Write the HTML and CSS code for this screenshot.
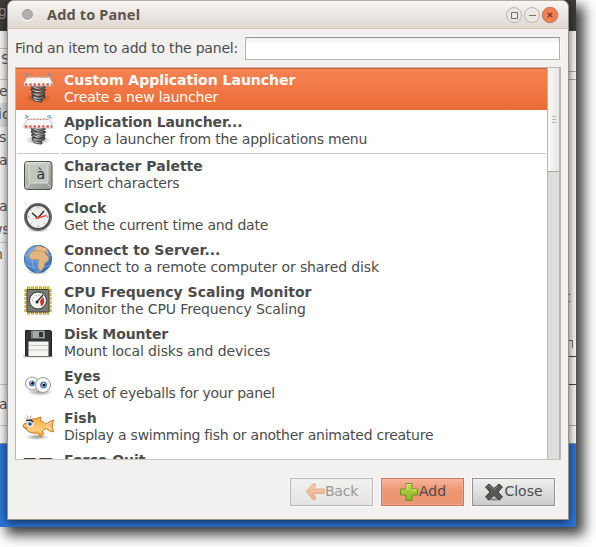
FILE: index.html
```html
<!DOCTYPE html>
<html lang="en">
<head>
<meta charset="utf-8">
<title>Add to Panel</title>
<link rel="stylesheet" href="styles.css">
</head>
<body>
<svg width="0" height="0" class="defs" aria-hidden="true">
  <defs>
    <linearGradient id="metal" gradientUnits="userSpaceOnUse" x1="9" y1="0" x2="23" y2="0"><stop offset="0" stop-color="#555"/><stop offset=".4" stop-color="#ddd"/><stop offset="1" stop-color="#444"/></linearGradient>
    <linearGradient id="key" x1="0" y1="0" x2="1" y2="1"><stop offset="0" stop-color="#c5cbc1"/><stop offset="1" stop-color="#929890"/></linearGradient>
    <radialGradient id="shade"><stop offset="0" stop-color="#000" stop-opacity=".42"/><stop offset="1" stop-color="#000" stop-opacity="0"/></radialGradient>
    <radialGradient id="globe" cx=".35" cy=".25" r=".8"><stop offset="0" stop-color="#87b3e6"/><stop offset="1" stop-color="#2e6fbd"/></radialGradient>
    <linearGradient id="fishskin" x1="0" y1="0" x2="0" y2="1"><stop offset="0" stop-color="#ffa83e"/><stop offset=".65" stop-color="#ffd083"/><stop offset="1" stop-color="#ee8818"/></linearGradient>
    <linearGradient id="plus" x1="0" y1="0" x2="0" y2="1"><stop offset="0" stop-color="#c4de45"/><stop offset="1" stop-color="#86b32d"/></linearGradient>
    <linearGradient id="arrow" x1="0" y1="0" x2="0" y2="1"><stop offset="0" stop-color="#f5d0ad"/><stop offset="1" stop-color="#ecaa8d"/></linearGradient>
    <symbol id="spring" viewBox="0 0 32 32">
      <ellipse cx="16" cy="25" rx="13" ry="5" fill="url(#shade)"/>
      <path d="M10 13.500q6 3.500 12.500 0M10 16.500q6 4 12.500 .5M10.500 20q6 4 11.500 .5M11 23.500q6 3.500 11 0M11.500 24c0 3 3 4 7.500 4" fill="none" stroke="#3a3c39" stroke-width="2.800" stroke-linecap="round"/>
      <path d="M10 13.500q6 3.500 12.500 0M10 16.500q6 4 12.500 .5M10.500 20q6 4 11.500 .5M11 23.500q6 3.500 11 0M11.500 24c0 3 3 4 7.500 4" fill="none" stroke="url(#metal)" stroke-width="1.200"/>
      <path d="M5.500 4h22l3.200 6v3H2v-3z" fill="#f7f6f4" stroke="#b9b3ae" stroke-width=".8"/>
      <path d="M3 11.500h27" stroke="#e23b39" stroke-width="2" stroke-dasharray="2.300 2"/>
      <path d="M6 4.500h21" stroke="#e58a86" stroke-width="1" stroke-dasharray="1.500 1.500"/>
      <path d="m3 .5 4 1M2.500 3l3.500-.5M29 .5l-4 1M30 3l-3.500-.5" fill="none" stroke="#7097c4" stroke-width="1.200"/>
    </symbol>
  </defs>
</svg>
<div class="desktop">
  <div class="rear">
    <div class="rear-panel"><span>gs</span></div>
    <div class="rear-window">
      <i class="rule r1"></i><i class="rule r2"></i><i class="rule r3"></i><i class="rule r4"></i><i class="rule r5"></i><i class="rule r6"></i>
      <span class="frag row-s">S</span><span class="frag row-e">e</span><span class="frag row-ic">ic</span><span class="frag row-t">s</span><span class="frag row-a">a</span><span class="frag row-a2">a</span><span class="frag row-ws">ws</span><span class="frag row-n">n</span><span class="frag row-a3">a</span>
      <i class="edge e1"></i><i class="edge e2"></i><i class="edge e3"></i><i class="edge e4"></i><i class="edge e5"></i><i class="edge e6"></i><i class="edge e7"></i><i class="edge e8"></i>
    </div>
  </div>
  <main class="window">
    <header class="titlebar">
      <i class="menu-dot"></i><h1>Add to Panel</h1>
      <div class="controls">
        <svg width="52" height="18" viewBox="0 0 52 18">
          <g fill="#ece9e5" stroke="#bbb6ae"><circle cx="8" cy="9" r="7.500"/><circle cx="26" cy="9" r="7.500"/></g>
          <circle cx="44" cy="9" r="7.700" fill="#f37e50" stroke="#be785b"/>
          <path d="M5.500 6.500h6v6h-6zM23 9.500h7" fill="none" stroke="#77716a"/>
          <path d="m41.700 6.700 4.600 4.600m0-4.600-4.600 4.600" stroke="#74402b" stroke-width="1.300"/>
        </svg>
      </div>
    </header>
    <div class="search"><label for="find">Find an item to add to the panel:</label><input id="find" type="text"></div>
    <div class="list">
      <div class="items">
        <div class="item selected"><svg><use href="#spring"/></svg><div><b>Custom Application Launcher</b><p>Create a new launcher</p></div></div>
        <div class="item"><svg><use href="#spring"/></svg><div><b class="narrow">Application Launcher...</b><p>Copy a launcher from the applications menu</p></div></div>
        <div class="separator"><i></i><i></i></div>
        <div class="item">
          <svg viewBox="0 0 32 32"><rect x="2.500" y="2.500" width="27.500" height="28" rx="3" fill="url(#key)" stroke="#4c514b"/><path d="M4 5q0-1.500 2-1.500h21" fill="none" stroke="#e5e8e2"/><path d="m4 4 4 2m20-2-3 2M4 29l4-5m21 5-4-5" stroke="#f0f2ee" opacity=".7"/><rect x="7" y="5" width="19" height="19" rx="2" fill="#c2c7be" stroke="#d8dcd4"/><text x="14.500" y="20" class="key-letter">à</text></svg>
          <div><b>Character Palette</b><p>Insert characters</p></div></div>
        <div class="item">
          <svg viewBox="0 0 32 32"><ellipse cx="16" cy="28.500" rx="12" ry="3" fill="url(#shade)"/><circle cx="16" cy="16" r="12.400" fill="#efefed" stroke="#4d4e4c" stroke-width="3"/><circle cx="16" cy="16" r="13.300" fill="none" stroke="#898a87" stroke-width=".7"/><path d="M16 5.500v2m0 17v2M5.500 16h2m17 0h2M8.600 8.600l1 1m12.800 12.800 1 1M8.600 23.400l1-1" stroke="#8e8e8b"/><path d="m10 12 6 5 6-7" fill="none" stroke="#292929" stroke-width="1.300"/><path d="m13.500 17.500 11-3" stroke="#f04734" stroke-width="1.500"/></svg>
          <div><b>Clock</b><p>Get the current time and date</p></div></div>
        <div class="item">
          <svg viewBox="0 0 32 32"><ellipse cx="16" cy="29" rx="11" ry="3" fill="url(#shade)"/><circle cx="16" cy="16" r="13.700" fill="url(#globe)" stroke="#3566a4" stroke-width=".9"/><g fill="none" stroke="#b5d1ef" stroke-width=".7" opacity=".65"><ellipse cx="16" cy="16" rx="6" ry="13.500"/><path d="M3 13q13-8 26 0M4 22q12 6 24 0M16 3v26"/></g><path d="m12 8 5-1 6 1 1 4 3 2-1 4-3 2-1 4-3 4-2-1-1-6 1-4-3-1-4 1-3-3 1-4z" fill="#e2b681" stroke="#b98b5c" stroke-width=".7"/><path d="m13 4 4-1 7 2 3 5-2 1-1-3-4 1-2-2-2 1-3-1z" fill="#e6bd88" stroke="#ae8152" stroke-width=".5"/></svg>
          <div><b>Connect to Server...</b><p class="loose">Connect to a remote computer or shared disk</p></div></div>
        <div class="item">
          <svg viewBox="0 0 32 32"><path d="M2.500 5.500h27M2.500 9.500h27M2.500 13.500h27M2.500 17.500h27M2.500 21.500h27M2.500 25.500h27M6.500 1.500v28M10.500 1.500v28M14.500 1.500v28M18.500 1.500v28M22.500 1.500v28M26 1.500v28" stroke="#a88400" stroke-width="2.600"/><path d="M3 5.500h26M3 9.500h26M3 13.500h26M3 17.500h26M3 21.500h26M3 25.500h26M6.500 2v27M10.500 2v27M14.500 2v27M18.500 2v27M22.500 2v27M26 2v27" stroke="#f2ce3a" stroke-width="1.400"/><rect x="5" y="4.500" width="22" height="22.500" rx="1" fill="#777974" stroke="#444641"/><circle cx="16" cy="15.500" r="8.500" fill="#f5f5f3" stroke="#383a37"/><path d="M21 12a7 7 0 0 1-1 9h-1l-1-5z" fill="#d82a2c"/><path d="M10.500 16a6 6 0 0 1 9-5" fill="none" stroke="#777" stroke-dasharray="1 2"/><path d="m15 17 6-7" stroke="#292929" stroke-width="1.200"/><circle cx="15" cy="17" r="1.500" fill="#292929"/></svg>
          <div><b>CPU Frequency Scaling Monitor</b><p class="loose">Monitor the CPU Frequency Scaling</p></div></div>
        <div class="item">
          <svg viewBox="0 0 32 32"><path d="M1 29.500h30" stroke="#aaa" stroke-width="2" opacity=".6"/><path d="M3.500 3.500h25v1h1v24.500h-26z" fill="#343735" stroke="#202220"/><path d="M9 3.500h14v8H9z" fill="#7e8481"/><path d="M11 4h11v7H11z" fill="#a4aaa7"/><path d="M17 5h4v5h-4z" fill="#2f3331"/><path d="M6.500 14.500h20V29h-20z" fill="#f4f4f0"/><path d="M7 18.500h19M7 23h19" stroke="#c6c7c1"/></svg>
          <div><b class="narrow">Disk Mounter</b><p class="loose">Mount local disks and devices</p></div></div>
        <div class="item">
          <svg viewBox="0 0 32 32"><ellipse cx="18" cy="23" rx="13" ry="4" fill="url(#shade)"/><circle cx="10" cy="14.500" r="6.500" fill="#f6f6f4" stroke="#989a97"/><circle cx="21" cy="16" r="7.500" fill="#fafaf8" stroke="#989a97"/><circle cx="10" cy="14.500" r="2.500" fill="#7ba3d4" stroke="#3e6dab"/><circle cx="21.500" cy="16" r="3" fill="#7ba3d4" stroke="#3e6dab"/><circle cx="10.300" cy="14.300" r="1.200"/><circle cx="22" cy="16" r="1.300"/><path d="M9 13h1m11 1.500h1" stroke="#fff"/></svg>
          <div><b>Eyes</b><p class="tight">A set of eyeballs for your panel</p></div></div>
        <div class="item">
          <svg viewBox="0 0 32 32"><ellipse cx="15" cy="26" rx="12" ry="3" fill="url(#shade)"/><path d="M1 16l1-3 3-1q1-3 5-4l3 0 6-2-.5 3.500q3 1 5 3.500l8-4-1.500 6 1.500 6q-5-1-7-3.500l-3 1.500-1 1 1 3-3 3-3-4q-7 1-11-3l-1-2z" fill="url(#fishskin)" stroke="#c87920"/><path d="m2 16.500 3 1" stroke="#c35f10"/><ellipse cx="8" cy="12.500" rx="3" ry="3.500" fill="#b7d7ef" stroke="#fff" stroke-width=".7"/><circle cx="8" cy="13" r="1.600" fill="#234e83"/><path d="m4 9.500 5-.5 2 2" fill="none" stroke="#333" stroke-width="1.600"/><path d="M3 6.500l2 2m0-4 1 3m3-3-1 3" fill="none" stroke="#777" stroke-width=".7"/><path d="m24 14 6-3m-6 4 5 3" stroke="#ffe0a2"/></svg>
          <div><b>Fish</b><p class="tight">Display a swimming fish or another animated creature</p></div></div>
        <div class="item">
          <svg viewBox="0 0 32 32"><rect x="1" y="5.500" width="30" height="22" rx="2" fill="#777975" stroke="#454743"/><path d="M3 8h25v14H3z" fill="#464844"/><path d="M12 10.500 18 5h-4l-5 5z" fill="#f5f5f3"/><path d="M19 8.500h9" stroke="#d2a82e" stroke-width="2" stroke-dasharray="2 1"/></svg>
          <div><b>Force Quit</b><p>Force a misbehaving application to quit</p></div></div>
      </div>
      <div class="scrollbar"><div class="thumb"><i></i><i></i><i></i></div></div>
    </div>
    <footer class="actions">
      <button class="back" disabled><svg viewBox="0 0 20 20"><path d="m1 9.500 7-7.500q3-1 2.500 2L8 7h11q1.500 2.500 0 4.500H8l2.500 3.500q1 3-2.500 2.500z" fill="url(#arrow)" stroke="#e2ab87"/></svg>Back</button>
      <button class="add"><svg viewBox="0 0 20 20"><path d="M7 1.500h6V7h5.500v6H13v5.500H7V13H1.500V7H7z" fill="url(#plus)" stroke="#6f9227"/><path d="M8 7.500v-5h4m1.500 5.500h4" fill="none" stroke="#e0ee91"/></svg>Add</button>
      <button class="close"><svg viewBox="0 0 20 20"><ellipse cx="10" cy="17.500" rx="9" ry="2" fill="url(#shade)"/><path d="m5 2 5 4.500L15 2l3.500 3-4.500 5 4.500 5-3.500 3-5-4.500L5 18l-3.500-3L6 10 1.500 5z" fill="#555753" stroke="#3c3e3a"/><path d="m3 5 2-1.700 5 4.500 5-4.500" fill="none" stroke="#7c7e79"/></svg>Close</button>
    </footer>
  </main>
</div>
</body>
</html>
```

FILE: styles.css
```css
* { box-sizing: border-box; }
body { margin: 0; width: 596px; height: 547px; overflow: hidden; background: #fff; color: #4c4c4c; font: 14px/17px "DejaVu Sans", sans-serif; }
.defs { position: absolute; }
.desktop { position: relative; width: 576px; height: 527px; box-shadow: 7px 7px 12px 1px rgba(0,0,0,.75); clip-path: inset(0 -20px -20px 0); }
.rear { height: 527px; overflow: hidden; background: #2a73d5; }
.rear-panel { height: 31px; background: #3c3b37; color: #99958c; overflow: hidden; }
.rear-panel span { display: block; margin: 3px 0 0 -2px; font-size: 14px; }
.rear-window { position: relative; height: 413px; background: #f5f5f5; border-bottom: 1px solid #91908c; }
.frag { position: absolute; left: -1px; white-space: nowrap; color: #555; }
.row-s { top: 20px; left: 1px; } .row-e { top: 52px; } .row-ic { top: 75px; left: -2px; } .row-t { top: 98px; } .row-a { top: 121px; } .row-a2 { top: 167px; } .row-ws { top: 190px; left: -9px; } .row-n { top: 215px; left: -6px; } .row-a3 { top: 365px; }
.rule { position: absolute; left: 0; width: 8px; height: 1px; background: #c5c5c5; }
.r1 { top: 17px; } .r2 { top: 48px; } .r3 { top: 72px; height: 24px; background: #ddd; } .r4 { top: 211px; } .r5 { top: 353px; } .r6 { top: 394px; }
.edge { position: absolute; left: 568px; width: 8px; height: 1px; background: #aaa; }
.e1 { top: 40px; } .e2 { top: 48px; } .e3 { top: 325px; background: #444; } .e4 { top: 353px; background: #444; } .e5 { top: 394px; } .e6 { top: 309px; left: 569px; width: 4px; height: 8px; border: solid #666; border-width: 1px 1px 0 0; background: none; } .e7 { top: 263px; left: 569px; width: 1px; background: #333; } .e8 { top: 270px; left: 569px; width: 1px; background: #333; }
.window { position: absolute; left: 7px; top: 0; width: 562px; height: 520px; padding: 0 7px; background: #f2f1f0; border: 1px solid #999388; border-top-color: #b9a99c; border-radius: 7px 7px 0 0; box-shadow: 0 2px 9px rgba(0,0,0,.65); }
.titlebar { height: 28px; margin: 0 -7px 8px; padding: 0 9px 0 14px; display: flex; align-items: center; background: linear-gradient(#f8f6f4, #dfd8d1); border-bottom: 1px solid #cfc1b4; border-radius: 6px 6px 0 0; }
.menu-dot { width: 11px; height: 11px; border-radius: 50%; background: #b3b0ac; border: 1px solid #9d9994; box-shadow: 0 1px #fff; }
h1 { margin: 0 0 2px 14px; color: #5d554d; font: bold 14.500px/20px "Noto Sans", sans-serif; letter-spacing: .15px; white-space: nowrap; }
.controls { margin-left: auto; margin-right: 1px; width: 52px; height: 18px; }
.controls svg { display: block; overflow: visible; }
.search { display: flex; align-items: center; height: 23px; }
.search label { width: 230px; white-space: nowrap; letter-spacing: -.21px; }
.search input { width: 315px; height: 23px; padding: 0 4px; border: 1px solid #b3b0aa; border-top-color: #96938e; background: linear-gradient(#f1f1f1, #fff 8px); outline: 1px solid #f8f7f6; }
.list { display: flex; width: 546px; height: 393px; margin-top: 7px; border: 1px solid #b8b5b0; border-bottom-color: #c9c6c2; background: #fff; overflow: hidden; }
.items { width: 531px; height: 391px; overflow: hidden; flex: none; }
.item { height: 42px; padding: 4px 8px 4px 6px; display: flex; white-space: nowrap; }
.item svg { width: 32px; height: 32px; margin: 1px 10px 0 0; flex: none; }
.item b, .item p { display: block; margin: 0; height: 17px; }
.item p { letter-spacing: -.21px; }
.item p.loose { letter-spacing: -.11px; }
.item p.tight { letter-spacing: -.25px; }
.item b.narrow { letter-spacing: -.12px; }
.selected { background: linear-gradient(#f68352, #eb6c37); color: #fff; border-top: 1px solid #d95e2b; padding-top: 3px; }
.key-letter { font: 14px "DejaVu Sans", sans-serif; fill: #252d35; }
.separator { height: 2px; display: flex; gap: 2px; padding: 1px 1px 0; }
.separator i { height: 1px; background: #c9c9c9; width: 42px; }
.separator i + i { width: auto; flex: 1; }
.scrollbar { width: 14px; background: #dfdddb; border: solid #b8b5b0; border-width: 0 1px; }
.thumb { height: 104px; display: flex; flex-direction: column; align-items: center; justify-content: center; gap: 2px; background: linear-gradient(90deg, #fafafa, #e6e5e3); border-bottom: 1px solid #aaa7a2; }
.thumb i { width: 4px; height: 1px; background: #b5b3af; }
.actions { display: flex; justify-content: flex-end; gap: 8px; padding: 18px 6px 0 0; }
button { display: flex; width: 83px; height: 28px; padding: 0 0 1px; justify-content: center; align-items: center; color: #4c4c4c; font: 14px/17px "DejaVu Sans", sans-serif; border: 1px solid #96948f; outline: 1px solid #faf9f8; background: linear-gradient(#f0f0f0, #ccc); }
button svg { width: 20px; height: 20px; flex: none; }
.back { border-color: #bbb8b4; color: #999792; background: linear-gradient(#f1f1f0, #e5e4e3); }
.back, .back svg { letter-spacing: -.2px; }
.add { border-color: #cb7655; background: linear-gradient(#f9b39b, #ed9571 45%, #e89776); box-shadow: inset 0 0 2px #ffc9b5; }
```
